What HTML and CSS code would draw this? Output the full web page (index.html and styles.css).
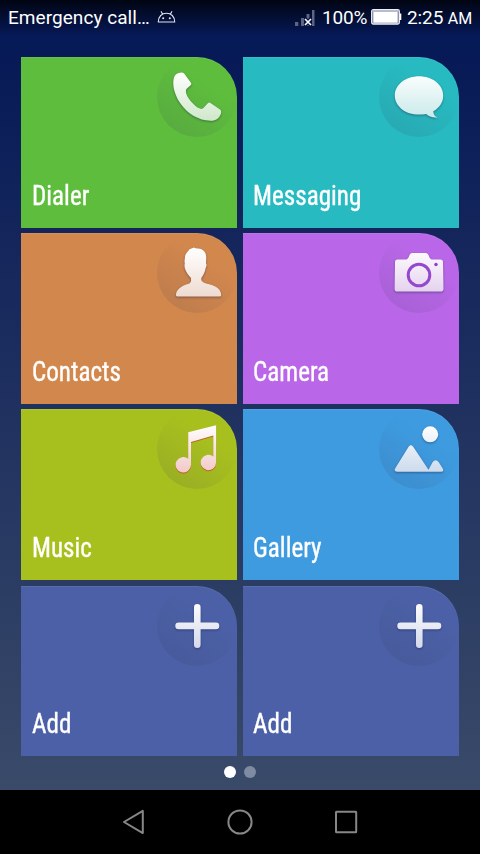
FILE: index.html
```
<!DOCTYPE html>
<html lang="en">
<head>
<meta charset="utf-8">
<title>Home</title>
<link rel="stylesheet" href="styles.css">
</head>
<body>
<div class="phone">
  <header class="status">
    <span class="carrier">Emergency call…</span>
    <svg class="droid" width="20" height="14" viewBox="0 0 20 14" fill="none" stroke="#dfe3ee" stroke-width="1.1"><path d="M1.3 12C1.3 6.400 5 3.200 9.500 3.200S17.700 6.400 17.700 12zM5.500 4.100 4 1.200M13.500 4.100 15 1.200"/><circle cx="6.200" cy="8.200" r=".5"/><circle cx="12.800" cy="8.200" r=".5"/></svg>
    <span class="spacer"></span>
    <svg class="signal" width="20" height="18" viewBox="0 0 20 18"><path fill="#5d6583" d="M0 13h3.300v4H0zM6 9h3v8H6zM11.500 5h3v12h-3zM17 1h2.500v16H17z"/><path d="m10 10 6 6m0-6-6 6" stroke="#071447" stroke-width="4"/><path d="m10 10 6 6m0-6-6 6" stroke="#fff" stroke-width="1.600"/></svg>
    <span class="percent">100%</span>
    <svg class="battery" width="31" height="16" viewBox="0 0 31 16"><rect x=".7" y=".7" width="27.600" height="14.300" rx="1.500" fill="#5c6484" stroke="#eef0f5" stroke-width="1.300"/><path fill="#fff" d="M2.300 3h24.400v10.700H2.300zM28.500 4.500h1.800v6.500h-1.800z"/><path fill="#b9bdc9" d="M1.500 1h26V3h-26z"/></svg>
    <span class="time">2:25 <small>AM</small></span>
  </header>

  <svg class="defs" width="0" height="0">
    <defs>
      <linearGradient id="shade" x1=".75" y1=".2" x2=".25" y2=".95"><stop offset=".2" stop-color="#303050" stop-opacity="0"/><stop offset="1" stop-color="#303050" stop-opacity=".12"/></linearGradient>
      <linearGradient id="green" gradientUnits="userSpaceOnUse" x1="0" y1="15" x2="0" y2="64"><stop stop-color="#fff"/><stop offset="1" stop-color="#cfe8ca"/></linearGradient>
      <linearGradient id="teal" gradientUnits="userSpaceOnUse" x1="0" y1="15" x2="0" y2="64"><stop stop-color="#fff"/><stop offset="1" stop-color="#c6e8e8"/></linearGradient>
      <linearGradient id="tan" gradientUnits="userSpaceOnUse" x1="0" y1="15" x2="0" y2="64"><stop stop-color="#fff"/><stop offset="1" stop-color="#eedbd0"/></linearGradient>
      <linearGradient id="lilac" gradientUnits="userSpaceOnUse" x1="0" y1="15" x2="0" y2="64"><stop stop-color="#fff"/><stop offset="1" stop-color="#e2cdec"/></linearGradient>
      <linearGradient id="rose" gradientUnits="userSpaceOnUse" x1="0" y1="15" x2="0" y2="64"><stop stop-color="#fff"/><stop offset="1" stop-color="#f2c9c8"/></linearGradient>
      <linearGradient id="sky" gradientUnits="userSpaceOnUse" x1="0" y1="15" x2="0" y2="64"><stop stop-color="#fff"/><stop offset="1" stop-color="#cbdaec"/></linearGradient>
      <linearGradient id="slate" gradientUnits="userSpaceOnUse" x1="0" y1="15" x2="0" y2="64"><stop stop-color="#fff"/><stop offset="1" stop-color="#d2d7ea"/></linearGradient>
    </defs>
  </svg>

  <main class="tiles">
    <a class="tile dialer"><svg class="icon" viewBox="0 0 80 80"><circle cx="40" cy="40" r="40" fill="url(#shade)"/><path class="glyph" fill="url(#green)" d="M16.700 21.500Q17.400 17.700 21 16.300Q25.500 14.500 27.400 16.800L33.900 25.700Q34.900 27 33.600 28.200L29.700 31.800C27.800 33.600 29.300 38.300 32.300 42.300C35.500 46.700 40.500 51.200 43.600 51.800Q46 52.300 47.800 49.600L50.800 46.300Q52 45 53.500 46L63 52.600Q64.700 54 63.900 56.700C62.300 61.300 58.500 64 53.500 63.800C41.500 63.600 30.500 56.500 24 47.300C18.300 39.300 15 29.800 16.700 21.500Z"/></svg><span class="label">Dialer</span></a>
    <a class="tile messaging"><svg class="icon" viewBox="0 0 80 80"><circle cx="40" cy="40" r="40" fill="url(#shade)"/><path class="glyph" fill="url(#teal)" d="M40 19.200C53.400 19.200 64.200 27.600 64.200 38.400C64.200 45.300 60.500 50.700 54.300 54.200C54.300 57.500 55.900 59.500 58.700 60.400C53.800 60.900 49.800 59.700 47.300 57C45 57.500 42.500 57.600 40 57.600C26.400 57.600 15.800 49.200 15.800 38.400C15.800 27.600 26.600 19.200 40 19.200Z"/></svg><span class="label">Messaging</span></a>
    <a class="tile contacts"><svg class="icon" viewBox="0 0 80 80"><circle cx="40" cy="40" r="40" fill="url(#shade)"/><path class="glyph" fill="url(#tan)" d="M37 14.500Q38 15.400 41 15.600C47 16.100 49.700 20 49.200 26L49 30.500Q50.300 32 48.700 34.800C48 39 46.500 42 44.300 45V47C45.200 49.500 48.500 50.400 53 51.500C60 53.200 64 56.800 64.200 62Q64.200 63.500 62.500 63.500H20.300Q18.800 63.500 18.900 61.800C19.300 56.700 24 53 31 51C33.500 50.200 34.500 48.500 34 46.500V45C31.500 42.600 29.500 39.500 28.300 36.500Q27 33 27.800 30.500Q27.200 27.500 27.900 25.500Q27.500 22.500 29.700 19.800L32.500 16.300Z"/></svg><span class="label">Contacts</span></a>
    <a class="tile camera"><svg class="icon" viewBox="0 0 80 80"><circle cx="40" cy="40" r="40" fill="url(#shade)"/><path class="glyph" fill="url(#lilac)" d="M18.500 26.400H27.500Q29.500 25.900 30.300 22.500Q31 20 33 20H47Q49 20 49.700 22.500Q50.500 25.900 52.500 26.400H61.500Q64 26.400 64 29L64.500 55.700Q64.500 58.500 61.700 58.500H18.300Q15.500 58.500 15.600 55.700L16 29Q16 26.400 18.500 26.400Z"/><circle cx="40" cy="42" r="10.800" fill="none" stroke="#9547cf" stroke-width="3"/><circle cx="57" cy="31.500" r="1.700" fill="#8d3bcb"/></svg><span class="label">Camera</span></a>
    <a class="tile music"><svg class="icon" viewBox="0 0 80 80"><circle cx="40" cy="40" r="40" fill="url(#shade)"/><path class="glyph warm" fill="url(#rose)" d="M31.200 23.300 59.100 16.200V53.400A7.700 7.700 0 1 1 56.300 47.500V26.600L34 33.100V56A7.700 7.700 0 1 1 31.200 49.800Z"/></svg><span class="label">Music</span></a>
    <a class="tile gallery"><svg class="icon" viewBox="0 0 80 80"><circle cx="40" cy="40" r="40" fill="url(#shade)"/><g class="glyph" fill="url(#sky)"><circle cx="51.200" cy="25.300" r="8"/><path d="M29.600 37.700Q31.900 35 34.200 37.700L49.500 60.800 53.700 53Q56.700 49.300 59.600 53L63.900 59.800Q65.200 62.700 62 62.800H18.200Q14.600 62.600 16.100 59.500Z"/></g></svg><span class="label">Gallery</span></a>
    <a class="tile add"><svg class="icon" viewBox="0 0 80 80"><circle cx="40" cy="40" r="40" fill="url(#shade)"/><path class="glyph" fill="url(#slate)" d="M37 21.200a3.300 3.300 0 0 1 6.600 0V36.600H59a3.300 3.300 0 0 1 0 6.600H43.600V58.800a3.300 3.300 0 0 1-6.600 0V43.200H21.600a3.300 3.300 0 0 1 0-6.600H37Z"/></svg><span class="label">Add</span></a>
    <a class="tile add"><svg class="icon" viewBox="0 0 80 80"><circle cx="40" cy="40" r="40" fill="url(#shade)"/><path class="glyph" fill="url(#slate)" d="M37 21.200a3.300 3.300 0 0 1 6.600 0V36.600H59a3.300 3.300 0 0 1 0 6.600H43.600V58.800a3.300 3.300 0 0 1-6.600 0V43.200H21.600a3.300 3.300 0 0 1 0-6.600H37Z"/></svg><span class="label">Add</span></a>
  </main>

  <div class="pager"><i class="dot on"></i><i class="dot"></i></div>

  <nav class="navbar">
    <svg width="26" height="28" viewBox="0 0 26 28"><path d="M3 14 21.800 2.900V25.100Z"/></svg>
    <svg width="28" height="28" viewBox="0 0 28 28"><circle cx="14" cy="14" r="11.600"/></svg>
    <svg width="26" height="28" viewBox="0 0 26 28"><rect x="3" y="3.800" width="20.200" height="20.400" rx=".5"/></svg>
  </nav>
</div>
</body>
</html>
```
FILE: styles.css
```
* { box-sizing: border-box; }
body { margin: 0; background: #000; font-family: Roboto, "Liberation Sans", sans-serif; color: #fff; }
.phone {
  width: 480px; height: 854px; overflow: hidden;
  display: flex; flex-direction: column;
  background:
    linear-gradient(rgba(0,0,0,.8), rgba(0,0,0,0) 36px),
    linear-gradient(#05185a, #071a57 60px, #3a4a69 790px);
}
.status { height: 35px; flex: none; display: flex; align-items: center; padding: 0 8px; font-size: 19px; line-height: 35px; white-space: nowrap; }
.carrier { width: 149px; letter-spacing: .05px; }
.droid { margin-top: -1px; }
.spacer { flex: 1; }
.signal { margin-right: 7px; }
.percent { width: 49px; letter-spacing: -.15px; }
.battery { margin-top: -2px; }
.time { width: 65px; margin-left: 5px; letter-spacing: -.1px; }
.time small { font-size: 16px; }
.defs { position: absolute; }
.tiles { display: grid; grid-template-columns: 216px 216px; grid-template-rows: repeat(4, 170.7px); column-gap: 5.3px; row-gap: 5.4px; margin: 22.3px 0 0 21.4px; }
.tile { display: flex; flex-direction: column; justify-content: space-between; border-top-right-radius: 40px; box-shadow: inset 0 1px rgba(255,255,255,.08); }
.icon { width: 80px; height: 80px; align-self: flex-end; }
.glyph { filter: drop-shadow(0 1px 1px rgba(20,20,60,.4)); }
.warm { filter: drop-shadow(0 1.300px .6px rgba(200,70,30,.75)); }
.label { font-family: "Roboto Condensed", Roboto, sans-serif; font-stretch: condensed; font-size: 27px; line-height: 32px; margin: 0 0 15.900px 10.500px; align-self: flex-start; transform: scaleX(.93); transform-origin: 0 50%; -webkit-text-stroke: .35px #fff; }
.dialer { background: #5ebd3d; }
.messaging { background: #27bac0; }
.contacts { background: #d2874d; }
.camera { background: #b967e8; }
.music { background: #a8c01e; }
.gallery { background: #3e9be0; }
.add { background: #4b60a6; }
.pager { display: flex; justify-content: center; gap: 8px; margin-top: 10px; }
.dot { width: 12px; height: 12px; border-radius: 50%; background: #7f8aa3; }
.dot.on { background: #fff; }
.navbar { margin-top: auto; height: 64px; flex: none; background: #000; display: flex; justify-content: space-between; align-items: center; padding: 0 121px; }
.navbar svg { fill: none; stroke: #878787; stroke-width: 2; stroke-linejoin: round; }
```
